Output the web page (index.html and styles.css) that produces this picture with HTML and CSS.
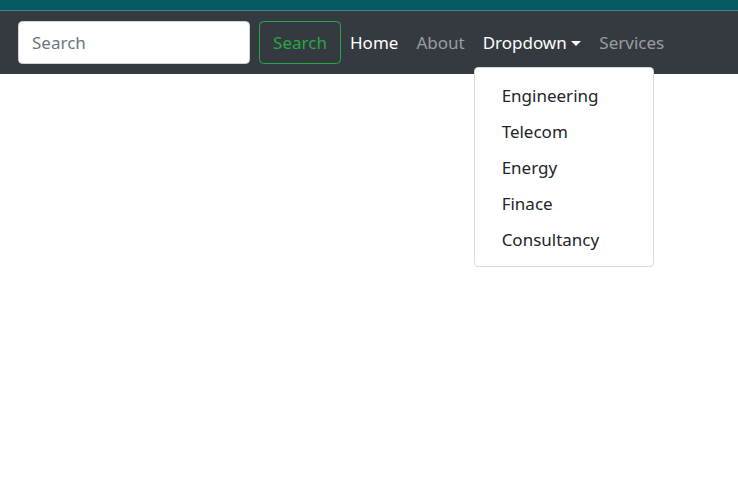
FILE: index.html
```html
<!DOCTYPE html>
<html>
<head>
<meta charset="utf-8">
<link rel="stylesheet" href="styles.css">
</head>
<body>
<div class="topbar"></div>
<nav class="navbar">
  <form class="search">
    <input class="search-input" type="text" placeholder="Search">
    <button class="search-btn" type="button">Search</button>
  </form>
  <ul class="nav">
    <li class="nav-item"><a class="nav-link active" href="#">Home</a></li>
    <li class="nav-item"><a class="nav-link" href="#">About</a></li>
    <li class="nav-item dropdown">
      <a class="nav-link active caret" href="#">Dropdown</a>
      <div class="menu">
        <a class="menu-item" href="#">Engineering</a>
        <a class="menu-item" href="#">Telecom</a>
        <a class="menu-item" href="#">Energy</a>
        <a class="menu-item" href="#">Finace</a>
        <a class="menu-item" href="#">Consultancy</a>
      </div>
    </li>
    <li class="nav-item"><a class="nav-link" href="#">Services</a></li>
  </ul>
</nav>
</body>
</html>
```

FILE: styles.css
```css
* { box-sizing: border-box; }
html, body { margin: 0; padding: 0; }
html { height: 100%; background: #fff; }
body {
  min-height: 100%;
  font-family: "Noto Sans", "Open Sans", sans-serif;
  font-size: 17px;
  line-height: 27px;
  color: #212529;
  background: #fff;
}
.topbar {
  height: 11px;
  background: #055b61;
  border-bottom: 1px solid #3a8888;
}
.navbar {
  position: relative;
  z-index: 5;
  display: flex;
  align-items: center;
  height: 63px;
  padding: 9px 18px;
  background: #343a40;
}
.search { display: flex; align-items: center; margin: 0; }
.search-input {
  width: 232px;
  height: 43px;
  padding: 6px 13px;
  font: inherit;
  color: #495057;
  background: #fff;
  border: 1px solid #ced4da;
  border-radius: 4.5px;
  margin-right: 9px;
  outline: none;
}
.search-input::placeholder { color: #6c757d; opacity: 1; }
.search-btn {
  height: 43px;
  width: 82px;
  padding: 0;
  font: inherit;
  color: #28a745;
  background: transparent;
  border: 1px solid #28a745;
  border-radius: 4.5px;
}
.nav {
  display: flex;
  list-style: none;
  margin: 0;
  padding: 0;
}
.nav-item { position: relative; }
.nav-link {
  display: block;
  padding: 9px 9px;
  color: rgba(255,255,255,.5);
  text-decoration: none;
}
.nav-link.active { color: #fff; }
.caret::after {
  content: "";
  display: inline-block;
  margin-left: 4.6px;
  vertical-align: 3.5px;
  border-top: 5.4px solid;
  border-right: 5.4px solid transparent;
  border-left: 5.4px solid transparent;
}
.menu {
  position: absolute;
  z-index: 10;
  top: 100%;
  left: 0;
  margin-top: 2.25px;
  width: 180px;
  padding: 9px 0;
  background: #fff;
  border: 1px solid rgba(0,0,0,.15);
  border-radius: 4.5px;
}
.menu-item {
  display: block;
  padding: 4.5px 27px;
  color: #212529;
  text-decoration: none;
  white-space: nowrap;
}
```
